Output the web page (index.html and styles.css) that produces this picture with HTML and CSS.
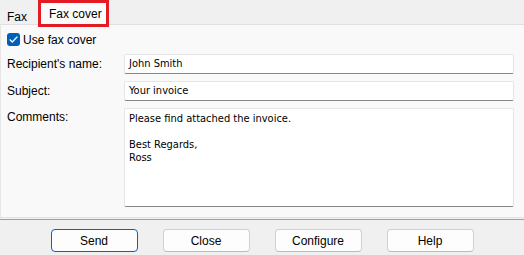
FILE: index.html
```html
<!DOCTYPE html>
<html>
<head>
<meta charset="utf-8">
<link rel="stylesheet" href="styles.css">
</head>
<body>
<div class="window">
  <div class="tabs">
    <div class="tab">Fax</div>
    <div class="tab tab-sel">Fax cover</div>
  </div>
  <div class="panel">
    <label class="check-row">
      <span class="checkbox"><svg width="13" height="13" viewBox="0 0 13 13"><path d="M3 6.8 L5.3 9 L10 4" fill="none" stroke="#fff" stroke-width="1.2" stroke-linecap="round" stroke-linejoin="round"/></svg></span>
      <span class="check-text">Use fax cover</span>
    </label>
    <div class="form">
      <div class="label">Recipient's name:</div>
      <div class="field">John Smith</div>
      <div class="label">Subject:</div>
      <div class="field">Your invoice</div>
      <div class="label label-top">Comments:</div>
      <div class="field area">Please find attached the invoice.<br><br>Best Regards,<br>Ross</div>
    </div>
  </div>
  <div class="separator"></div>
  <div class="footer">
    <button class="btn btn-default">Send</button>
    <button class="btn">Close</button>
    <button class="btn">Configure</button>
    <button class="btn">Help</button>
  </div>
</div>
</body>
</html>
```
FILE: styles.css
```css
html, body {
  margin: 0;
  padding: 0;
  background: #f0f0f0;
}
.window {
  width: 524px;
  height: 255px;
  font-family: "Liberation Sans", Arial, sans-serif;
  font-size: 12px;
  color: #000;
  overflow: hidden;
}
.tabs {
  height: 24px;
  display: flex;
  align-items: flex-end;
  position: relative;
  z-index: 2;
}
.tab {
  box-sizing: border-box;
  width: 38px;
  height: 14px;
  line-height: 14px;
  padding: 0 0 0 7px;
  background: #f0f0f0;
}
.tab-sel {
  box-sizing: border-box;
  width: 71px;
  height: 27px;
  margin-bottom: -3px;
  border: 3px solid #e41b23;
  background: #fbfbfb;
  padding: 4px 0 0 8px;
  line-height: 14px;
}
.panel {
  position: relative;
  z-index: 1;
  height: 184px;
  background: #f9f9f9;
  border-top: 1px solid #e0e0e0;
  border-left: 1px solid #e6e6e6;
  padding: 8px 10px 0 6px;
  box-sizing: content-box;
}
.check-row {
  display: flex;
  align-items: center;
  height: 13px;
  gap: 3px;
}
.checkbox {
  width: 13px;
  height: 13px;
  background: #005fb8;
  border-radius: 3px;
  display: block;
}
.checkbox svg { display: block; }
.form {
  display: grid;
  grid-template-columns: 117px 390px;
  row-gap: 7px;
  margin-top: 8px;
}
.label {
  height: 20px;
  line-height: 20px;
}
.label-top {
  line-height: 14px;
  padding-top: 2px;
}
.field {
  box-sizing: border-box;
  height: 20px;
  background: #fff;
  border: 1px solid #e5e5e5;
  border-bottom: 1px solid #868686;
  border-radius: 2px;
  padding: 0 4px;
  font-family: "DejaVu Sans Condensed", "DejaVu Sans", sans-serif;
  font-size: 11px;
  line-height: 18px;
}
.area {
  height: 99px;
  line-height: 13px;
  padding-top: 3px;
}
.separator {
  height: 1px;
  border-top: 1px solid #e3e3e3;
  border-bottom: 1px solid #a0a0a0;
}
.footer {
  display: flex;
  justify-content: center;
  gap: 25px;
  padding-top: 9px;
}
.btn {
  box-sizing: border-box;
  width: 87px;
  height: 23px;
  background: #fdfdfd;
  border: 1px solid #d0d0d0;
  border-bottom-color: #bcbcbc;
  border-radius: 4px;
  font-family: "Liberation Sans", Arial, sans-serif;
  font-size: 12px;
  color: #000;
  padding: 0;
}
.btn-default {
  border: 1px solid #0067c0;
}
```
